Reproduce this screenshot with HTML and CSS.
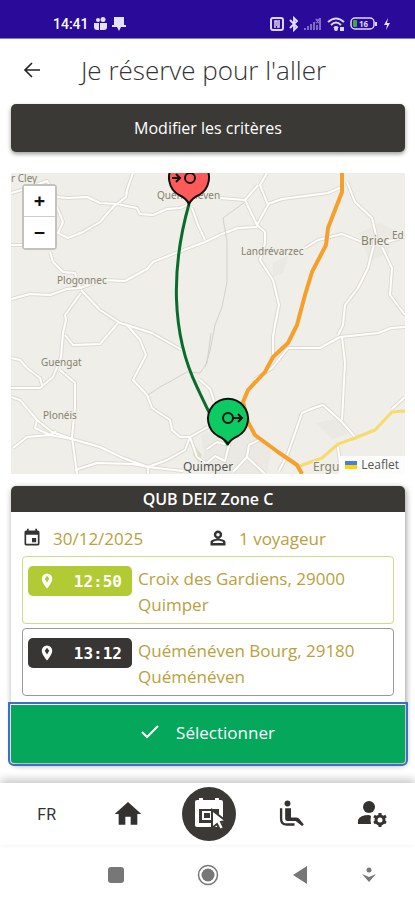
FILE: index.html
```
<!DOCTYPE html>
<html lang="fr">
<head>
  <meta charset="UTF-8">
  <meta name="viewport" content="width=device-width, initial-scale=1.0">
  <title>Je réserve pour l'aller</title>
  <link rel="stylesheet" href="styles.css">
</head>
<body>
  <!-- Phone status bar -->
  <div class="status-bar">
    <div class="status-left">
      <span class="clock">14:41</span>
      <svg width="13" height="14" viewBox="0 0 13 14" fill="#e6e0fa">
        <circle cx="4" cy="3" r="2"/><circle cx="9" cy="2.500" r="2.500"/>
        <path d="M0 6h5v7H3Q0 13 0 10zM6 6h7v4q0 3-3 3H6z"/>
      </svg>
      <svg width="14" height="14" viewBox="0 0 14 14" fill="#e6e0fa">
        <path d="M2 0h10v8h2v2H9l-2 4-2-4H0V8h2z"/>
      </svg>
    </div>
    <div class="status-right">
      <svg width="14" height="14" viewBox="0 0 14 14" fill="none" stroke="#dcd6f7" stroke-width="2">
        <rect x="1" y="1" width="12" height="12" rx="2"/>
        <path d="M5 11V4h2v5M9 3v7H7" stroke-width="1.500"/>
      </svg>
      <svg width="10" height="16" viewBox="0 0 10 16" fill="none" stroke="#e6e0fa" stroke-width="1.800">
        <path d="M1 4l7 7-3 3V2l3 3-7 7"/>
      </svg>
      <svg width="18" height="14" viewBox="0 0 18 14" fill="none" stroke="#7d6bc4" stroke-width="2">
        <path d="M1 13v-2M4 13v-4M7 13V7M10 13V5M13 13V8M16 13V1M12 2l3 4M15 2l-3 4"/>
      </svg>
      <svg width="18" height="14" viewBox="0 0 18 14" fill="none" stroke="#dcd6f7" stroke-width="2">
        <path d="M1 5q8-7 16 0M4 8q5-5 10 0M7 11q2-2 4 0"/>
        <circle cx="9" cy="12" r="1"/><path d="M14 10v4M16 10v4"/>
      </svg>
      <svg width="28" height="14" viewBox="0 0 28 14">
        <rect x="1" y="1" width="23" height="11" rx="4" fill="none" stroke="#dcd6f7" stroke-width="1.500"/>
        <rect x="3" y="3" width="4" height="7" rx="1" fill="#3fa83f"/>
        <path d="M26 5v4" stroke="#dcd6f7" stroke-width="2"/>
        <text x="9" y="10" class="battery-text">16</text>
      </svg>
      <svg width="8" height="12" viewBox="0 0 8 12" fill="#e6e0fa"><path d="M5 0L1 7h3l-1 5 4-7H4z"/></svg>
    </div>
  </div>

  <div class="header">
    <button class="back-btn" aria-label="Retour">
      <svg width="18" height="18" viewBox="0 0 18 18" fill="none" stroke="#222" stroke-width="1.600">
        <path d="M17 9H2M9 2L2 9l7 7"/>
      </svg>
    </button>
    <h1>Je réserve pour l'aller</h1>
  </div>

  <div class="content">
    <button class="criteria-btn">Modifier les critères</button>

    <div class="map">
      <svg class="map-canvas" viewBox="0 0 394 301" preserveAspectRatio="xMidYMid slice">
        <defs>
          <g id="roads">
            <path d="M46 24L57 25L76 24L89 30L106 31L126 35L129 41L142 42L156 36L169 35L179 31"/>
            <path d="M122 0L116 17L115 24L102 34L89 49L72 59L57 65L47 60L52 49L46 34"/>
            <path d="M39 79L42 89L52 99L64 100L69 115M0 72H12M0 20L14 16L36 8L46 24"/>
            <path d="M0 126L19 121L39 122L56 116L69 115L92 107L114 108L136 96L142 89L162 81L194 69L211 61L227 55L246 54"/>
            <path d="M181 35L187 52L194 67M70 117L89 137L109 150L116 152L129 167L135 182L122 207L136 222L141 235L159 247L161 257L169 264L179 264L197 254"/>
            <path d="M70 120L54 142L55 147L52 160L50 184L42 204L29 215L0 215"/>
            <path d="M54 162L62 172L89 171L107 150M116 152L141 160L171 177"/>
            <path d="M0 185L9 187L16 195L29 205L31 212M49 197L64 210L64 234L61 264L66 301"/>
            <path d="M0 224L9 227L26 247L41 259L61 266L89 274L112 285L137 294L156 287L174 277L179 264"/>
            <path d="M26 247L24 255L39 262L45 258M2 275L16 264L39 262L61 266M64 297L86 290L122 291L137 294V301M137 294L172 298"/>
            <path d="M179 264L186 284L197 292M188 206L199 216L203 228M196 276L206 269L218 272L214 288L204 283L196 290"/>
            <path d="M256 0L249 12L257 32L246 52L254 59L254 70L249 87L262 107L268 132L264 152L262 164L262 182"/>
            <path d="M209 25L234 27L247 12M234 27L246 52M257 31L271 26L317 20L331 14"/>
            <path d="M336 9L344 29L361 45L365 62L362 75L357 95L347 115L334 132L332 152L327 162"/>
            <path d="M294 75L307 67L331 61L351 69M371 74L381 95L379 122L394 142M371 70L394 64"/>
            <path d="M243 207L261 195L277 175L309 175L329 164L367 160L380 155L394 154"/>
            <path d="M331 164L334 190L331 247M277 280L291 240L300 236L312 232L331 249L344 264M394 224L381 236"/>
            <path d="M254 301L236 284L238 272L250 266M222 299L236 284M327 274L329 290M268 298L277 280"/>
          </g>
        </defs>
        <rect width="394" height="301" fill="#f0eee8"/>
        <path d="M348 60l20-10 14 6-4 24-20 8zM190 262l40-14 30 30-4 23h-60zM262 90l16-8-6 18-10 4zM305 250l26-6 10 16-20 6z" fill="#ebe9e3"/>
        <path d="M183 272l8 10-3 8-6-8z" fill="#dcdec0"/>
        <use href="#roads" class="road-case"/>
        <use href="#roads" class="road"/>
        <path class="track" d="M234 29L212 45L216 69L216 109L211 134L204 152L199 178L194 194M137 222L149 214L176 199L189 200L196 190L200 160"/>
        <path class="road-yellow" d="M286 294L311 285L327 271L344 265L364 257L381 239L394 238"/>
        <path class="road-orange" d="M331 0L331 19L317 55L315 72L301 99L294 122L286 152L277 170L262 184L254 199L237 217L232 229L237 249L244 262L267 279L286 292L291 301"/>

        <text x="0" y="9" class="place">r Cley</text>
        <text x="146" y="26" class="place">Quéménéven</text>
        <text x="46" y="111" class="place">Plogonnec</text>
        <text x="230" y="82" class="place">Landrévarzec</text>
        <text x="350" y="72" class="place town">Briec</text>
        <text x="381" y="66" class="place">Ed</text>
        <text x="30" y="193" class="place">Guengat</text>
        <text x="32" y="246" class="place">Plonéis</text>
        <text x="172" y="298" class="place city">Quimper</text>
        <text x="302" y="298" class="place town">Ergu</text>

        <path class="trip" d="M178 31C160 95 160 160 186 214C194 231 202 250 217 272"/>

        <!-- Arrival and departure pins -->
        <g class="pin pin-red">
          <path d="M178 31Q175 25 168 22A20 20 0 1 1 188 22Q181 25 178 31z"/>
          <circle cx="179" cy="5" r="5"/>
          <path d="M161 5h8M165 1l4 4-4 4"/>
        </g>
        <g class="pin pin-green">
          <path d="M217 271Q214 266 207 263A20 20 0 1 1 227 263Q220 266 217 271z"/>
          <circle cx="217" cy="245" r="5"/>
          <path d="M222 245h8M227 241l4 4-4 4"/>
        </g>
      </svg>
      <div class="zoom-control">
        <button aria-label="Zoom avant">+</button>
        <button aria-label="Zoom arrière">−</button>
      </div>
      <a class="attribution" href="https://leafletjs.com">
        <svg width="12" height="8" viewBox="0 0 12 8"><path fill="#4c7be1" d="M0 0h12v4H0z"/><path fill="#ffd500" d="M0 4h12v4H0z"/></svg>
        Leaflet
      </a>
    </div>

    <div class="card">
      <h2>QUB DEIZ Zone C</h2>
      <div class="card-body">
        <div class="trip-info">
          <div class="info">
            <svg width="20" height="20" viewBox="0 0 24 24" fill="#333"><path d="M17 12h-5v5h5v-5zM16 1v2H8V1H6v2H5c-1.100 0-2 .9-2 2v14c0 1.100.9 2 2 2h14c1.100 0 2-.9 2-2V5c0-1.100-.9-2-2-2h-1V1h-2zm3 18H5V8h14v11z"/></svg>
            <span>30/12/2025</span>
          </div>
          <div class="info">
            <svg width="20" height="20" viewBox="0 0 24 24" fill="#333"><path d="M12 5.900a2.100 2.100 0 1 1 0 4.200 2.100 2.100 0 0 1 0-4.200m0 9c3 0 6.100 1.500 6.100 2.100v1.100H5.900V17c0-.6 3.100-2.100 6.100-2.100M12 3a4 4 0 0 0 0 10 4 4 0 0 0 0-10zm0 10c-3 0-9 1.300-9 4v4h18v-4c0-2.700-6-4-9-4z"/></svg>
            <span>1 voyageur</span>
          </div>
        </div>
        <div class="stop stop-start">
          <div class="time">
            <svg width="18" height="18" viewBox="0 0 24 24"><path fill="#fff" d="M12 2a7 7 0 0 0-7 7c0 5.200 7 13 7 13s7-7.800 7-13a7 7 0 0 0-7-7z"/><path fill="#b2cb35" d="M12 5l3 4-3 5-3-5z"/></svg>
            <span>12:50</span>
          </div>
          <p>Croix des Gardiens, 29000 Quimper</p>
        </div>
        <div class="stop stop-end">
          <div class="time">
            <svg width="18" height="18" viewBox="0 0 24 24"><path fill="#fff" d="M12 2a7 7 0 0 0-7 7c0 5.200 7 13 7 13s7-7.800 7-13a7 7 0 0 0-7-7z"/><path fill="#383634" d="M12 5l3 4-3 5-3-5z"/></svg>
            <span>13:12</span>
          </div>
          <p>Quéménéven Bourg, 29180 Quéménéven</p>
        </div>
      </div>
      <button class="select-btn">
        <svg width="18" height="14" viewBox="0 0 18 14" fill="none" stroke="#fff" stroke-width="2"><path d="M1 7l5 5L17 1"/></svg>
        Sélectionner
      </button>
    </div>
  </div>

  <div class="bottom-nav">
    <a href="#" class="lang">FR</a>
    <a href="#" aria-label="Accueil">
      <svg width="32" height="32" viewBox="0 0 24 24" fill="#333230"><path d="M10 20v-6h4v6h5v-8h3L12 3 2 12h3v8z"/></svg>
    </a>
    <a href="#" class="active" aria-label="Réserver">
      <svg width="36" height="36" viewBox="0 0 36 36">
        <path d="M6 6h24v23H6z" fill="none" stroke="#fff" stroke-width="4" stroke-linejoin="round"/>
        <path d="M6 6h24v7H6zM8 2h4v4H8zM24 2h4v4h-4z" fill="#fff"/>
        <path d="M12 16h8v7h-8z" fill="none" stroke="#fff" stroke-width="2"/>
        <path d="M21 14l14 11-5 1 3 6-4 2-3-6-5 4z" fill="#fff" stroke="#3b3936" stroke-width="2"/>
      </svg>
    </a>
    <a href="#" aria-label="Trajets">
      <svg width="28" height="28" viewBox="0 0 24 24" fill="#333230"><circle cx="9" cy="3" r="2.500"/><path d="M7 7h5v8h4q2 0 3 1l4 5-1.500 1.300L16 18H9q-2 0-2-2z"/><path d="M3.500 7v9q0 5 5 5H15" fill="none" stroke="#333230" stroke-width="2"/></svg>
    </a>
    <a href="#" aria-label="Compte">
      <svg width="32" height="30" viewBox="0 0 32 30" fill="#333230">
        <circle cx="13" cy="8" r="6"/><path d="M2 25v-4q2-5 11-5l2 1q-1 4 0 8z"/>
        <path d="M24 14v14M18 17l12 7M30 17l-12 7" stroke="#333230" stroke-width="3"/>
        <circle cx="24" cy="21" r="4" fill="#fff" stroke="#333230" stroke-width="3"/>
      </svg>
    </a>
  </div>

  <div class="system-nav">
    <button aria-label="Applications récentes"><svg width="16" height="16"><rect width="16" height="16" rx="3" fill="#777"/></svg></button>
    <button aria-label="Écran d'accueil"><svg width="22" height="22"><circle cx="11" cy="11" r="9.500" fill="none" stroke="#777" stroke-width="1.500"/><circle cx="11" cy="11" r="6.500" fill="#777"/></svg></button>
    <button aria-label="Précédent"><svg width="14" height="18"><path d="M14 0v18L0 9z" fill="#777"/></svg></button>
    <button aria-label="Réduire"><svg width="14" height="16"><circle cx="7" cy="3" r="2.500" fill="#777"/><path d="M0 7l7 3 7-3-7 8z" fill="#777"/></svg></button>
  </div>
</body>
</html>
```
FILE: styles.css
```
* {
  box-sizing: border-box;
}

body {
  margin: 0;
  min-height: 100vh;
  display: flex;
  flex-direction: column;
  font-family: 'Open Sans', 'Noto Sans', sans-serif;
  font-size: 17px;
  color: #333;
  background-color: #fff;
}

button {
  font-family: inherit;
  border: none;
  cursor: pointer;
}

svg {
  display: block;
}

/* Status bar */
.status-bar {
  display: flex;
  justify-content: space-between;
  height: 39px;
  padding: 10px 24px 0 53px;
  background-color: #2a0a98;
  border-bottom: 1px solid #8676c9;
}

.status-left, .status-right {
  display: flex;
  align-items: center;
  gap: 5px;
}

.clock {
  font-family: Roboto, sans-serif;
  font-size: 14px;
  font-weight: 500;
  color: #fff;
}

.battery-text {
  font-size: 8px;
  font-weight: bold;
  fill: #dcd6f7;
}

/* Header */
.header {
  display: grid;
  grid-template-columns: 56px 1fr 64px;
  align-items: center;
  height: 65px;
  padding: 0 4px 4px;
}

.back-btn {
  justify-self: center;
  padding: 0;
  background: none;
}

.header h1 {
  margin: 0;
  font-size: 26px;
  font-weight: 300;
  line-height: 32px;
  text-align: center;
}

.content {
  padding: 0 10px 0 11px;
}

.criteria-btn {
  width: 100%;
  height: 48px;
  font-size: 16px;
  color: #fff;
  background-color: #3b3936;
  border-radius: 5px;
  box-shadow: 0 2px 4px rgba(0, 0, 0, 0.4);
}

/* Map */
.map {
  position: relative;
  margin-top: 21px;
}

.map-canvas {
  width: 100%;
}

.road-case, .road, .track, .road-yellow, .road-orange, .trip {
  fill: none;
  stroke-linejoin: round;
}

.road-case {
  stroke: #dedad2;
  stroke-width: 4px;
}

.road {
  stroke: #fff;
  stroke-width: 2px;
}

.track {
  stroke: #d3d1cb;
  stroke-width: 1px;
}

.road-yellow {
  stroke: #f5dc6c;
  stroke-width: 3px;
}

.road-orange {
  stroke: #f5a02c;
  stroke-width: 4px;
}

.trip {
  stroke: #0b6b2c;
  stroke-width: 3px;
}

.place {
  font-family: 'Noto Sans', sans-serif;
  font-size: 10px;
  fill: #85826f;
  stroke: #f0eee8;
  stroke-width: 2px;
  paint-order: stroke;
}

.town {
  font-size: 12px;
}

.city {
  font-size: 12px;
  fill: #555;
}

.pin {
  fill: none;
  stroke: #111;
  stroke-width: 2px;
}

.pin-red path:first-child {
  fill: #ff5a5a;
}

.pin-green path:first-child {
  fill: #0ccb62;
}

.zoom-control {
  position: absolute;
  top: 11px;
  left: 11px;
  display: flex;
  flex-direction: column;
  border: 2px solid #c4c2bd;
  border-radius: 4px;
}

.zoom-control button {
  width: 31px;
  height: 31px;
  padding: 0;
  font-size: 20px;
  font-weight: bold;
  line-height: 30px;
  color: #111;
  background-color: #fff;
}

.zoom-control button:first-child {
  border-bottom: 1px solid #ccc;
}

.attribution {
  position: absolute;
  right: 0;
  bottom: 0;
  display: flex;
  align-items: center;
  gap: 4px;
  padding: 0 6px;
  font-size: 12px;
  line-height: 18px;
  color: #555;
  text-decoration: none;
  background-color: rgba(255, 255, 255, 0.8);
}

/* Trip card */
.card {
  margin-top: 12px;
  border-radius: 5px;
  box-shadow: 1px 2px 6px rgba(0, 0, 0, 0.4);
}

.card h2 {
  margin: 0;
  font-size: 16px;
  font-weight: 600;
  line-height: 26px;
  text-align: center;
  color: #fff;
  background-color: #3b3936;
  border-radius: 5px 5px 0 0;
}

.card-body {
  display: flex;
  flex-direction: column;
  gap: 4px;
  padding: 12px 11px 9px;
  color: #bba03c;
}

.trip-info {
  display: grid;
  grid-template-columns: 1fr 1fr;
}

.info {
  display: flex;
  align-items: center;
  gap: 11px;
  height: 28px;
}

.stop {
  display: flex;
  align-items: flex-start;
  gap: 6px;
  padding: 9px 5px 5px;
  border-radius: 4px;
}

.stop-start {
  border: 1px solid #cddc8a;
}

.stop-end {
  border: 1px solid #999;
}

.stop p {
  margin: 0;
  flex: 1;
  padding-right: 16px;
  line-height: 26px;
}

.time {
  display: flex;
  align-items: center;
  justify-content: space-between;
  width: 104px;
  height: 30px;
  padding: 0 10px;
  font-family: 'DejaVu Sans Mono', monospace;
  font-size: 16px;
  font-weight: bold;
  color: #fff;
  border-radius: 5px;
}

.stop-start .time {
  background-color: #b2cb35;
}

.stop-end .time {
  background-color: #383634;
}

.select-btn {
  display: flex;
  align-items: center;
  justify-content: center;
  gap: 17px;
  width: 100%;
  height: 58px;
  padding: 0 0 4px;
  font-size: 17px;
  color: #fff;
  background-color: #05a75b;
  border-radius: 0 0 3px 3px;
  outline: 2px solid #3f6fc4;
  outline-offset: 1px;
}

/* Bottom navigation */
.bottom-nav {
  display: grid;
  grid-template-columns: repeat(5, 1fr);
  align-items: center;
  justify-items: center;
  height: 62px;
  margin-top: 20px;
  padding: 0 2px 0 6px;
  background-color: #fff;
  box-shadow: 0 -4px 8px rgba(0, 0, 0, 0.2);
}

.bottom-nav a {
  color: #333;
  text-decoration: none;
}

.bottom-nav .lang {
  font-family: Roboto, sans-serif;
  font-size: 16px;
}

.bottom-nav .active {
  display: flex;
  align-items: center;
  justify-content: center;
  width: 54px;
  height: 54px;
  background-color: #3b3936;
  border-radius: 50%;
}

.system-nav {
  display: grid;
  grid-template-columns: 2fr 2fr 2fr 1fr;
  align-items: center;
  justify-items: center;
  height: 55px;
  padding: 5px 23px 0 70px;
}

.system-nav button {
  padding: 0;
  background: none;
}
```
